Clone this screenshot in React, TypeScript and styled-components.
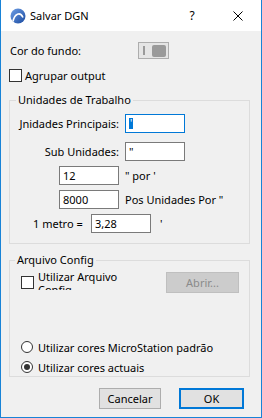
import React from "react";
import styled, { createGlobalStyle } from "styled-components";

const GlobalStyle = createGlobalStyle`
  html, body { margin: 0; padding: 0; background: #f0f0f0; }
  body { font-family: "Noto Sans", "Segoe UI", sans-serif; font-size: 11px; color: #000; }
  * { box-sizing: border-box; }
`;

const Window = styled.div`
  width: 262px;
  height: 418px;
  border: 1px solid #1883d7;
  border-top: none;
  background: #f0f0f0;
  display: flex;
  flex-direction: column;
  overflow: hidden;
`;

const TitleBar = styled.div`
  height: 31px;
  flex: none;
  background: #fff;
  display: flex;
  align-items: center;
  padding-left: 9px;
`;

const TitleText = styled.span`
  margin-left: 4px;
  flex: 1;
  font-size: 11px;
`;

const TitleButton = styled.div`
  width: 46px;
  height: 31px;
  display: flex;
  align-items: center;
  justify-content: center;
  font-size: 12px;
`;

const Body = styled.div`
  flex: 1;
  display: flex;
  flex-direction: column;
  padding: 0 11px 0 8px;
`;

const TopRow = styled.div`
  margin-top: 11px;
  height: 17px;
  display: flex;
  align-items: center;
`;

const TopLabel = styled.span`
  width: 129px;
  padding-left: 1px;
`;

const ToggleBox = styled.div`
  width: 31px;
  height: 17px;
  border: 1px solid #adadad;
  background: #e5e5e5;
  display: flex;
  align-items: center;
  padding-left: 4px;
`;

const ToggleBar = styled.div`
  width: 2px;
  height: 9px;
  background: #9a9a9a;
`;

const ToggleKnob = styled.div`
  width: 14px;
  height: 12px;
  border-radius: 2px;
  background: #9a9a9a;
  margin-left: 7px;
`;

const CheckRow = styled.label<{ $mt: number }>`
  margin-top: ${(p) => p.$mt}px;
  height: 13px;
  display: flex;
  align-items: center;
  gap: 3px;
`;

const CheckBox = styled.span<{ $mt?: number }>`
  width: 13px;
  height: 13px;
  flex: none;
  border: 1px solid #333;
  background: #fff;
  margin-top: ${(p) => p.$mt ?? 0}px;
`;

const Group = styled.fieldset<{ $mt: number; $pb: number }>`
  margin: ${(p) => p.$mt}px 0 0;
  padding: 0 0 ${(p) => p.$pb}px;
  border: 1px solid #dcdcdc;
  min-width: 0;
`;

const Legend = styled.legend<{ $offset: number }>`
  margin-left: ${(p) => p.$offset}px;
  padding: 0 2px;
  line-height: 14px;
  font-size: 11px;
`;

const FieldRow = styled.div<{ $mt: number; $pl?: number }>`
  display: flex;
  align-items: center;
  height: 19px;
  margin-top: ${(p) => p.$mt}px;
  padding-left: ${(p) => p.$pl ?? 0}px;
`;

const RightLabel = styled.span<{ $w: number }>`
  width: ${(p) => p.$w}px;
  text-align: right;
  margin-right: 6px;
  white-space: nowrap;
`;

const LeftLabel = styled.span<{ $w: number }>`
  width: ${(p) => p.$w}px;
  white-space: nowrap;
`;

const TextBox = styled.div<{ $focused?: boolean }>`
  width: 60px;
  height: 19px;
  border: 1px solid ${(p) => (p.$focused ? "#0078d7" : "#7a7a7a")};
  background: #fff;
  padding: 0 3px;
  display: flex;
  align-items: center;
  white-space: nowrap;
`;

const Selected = styled.span`
  background: #0078d7;
  color: #fff;
  height: 11px;
  width: 4px;
  line-height: 11px;
  display: inline-flex;
  justify-content: center;
  font-size: 10px;
`;

const AfterLabel = styled.span<{ $ml: number }>`
  margin-left: ${(p) => p.$ml}px;
  white-space: nowrap;
`;

const ConfigRow = styled.div`
  display: flex;
  align-items: flex-start;
  margin-top: 3px;
  padding: 0 10px 0 11px;
`;

const WrapLabel = styled.span`
  margin-left: 4px;
  width: 90px;
  height: 20px;
  line-height: 13px;
  overflow: hidden;
`;

const Button = styled.div<{ $w: number; $primary?: boolean; $disabled?: boolean }>`
  width: ${(p) => p.$w}px;
  height: 21px;
  display: flex;
  align-items: center;
  justify-content: center;
  background: ${(p) => (p.$disabled ? "#cccccc" : "#e1e1e1")};
  border: ${(p) => (p.$primary ? "2px solid #0078d7" : p.$disabled ? "1px solid #bfbfbf" : "1px solid #adadad")};
  color: ${(p) => (p.$disabled ? "#8a8a8a" : "#000")};
`;

const OpenButton = styled(Button)`
  margin-left: auto;
  margin-top: 2px;
`;

const RadioList = styled.div`
  margin-top: 45px;
  display: flex;
  flex-direction: column;
  gap: 2px;
  padding-left: 11px;
`;

const RadioRow = styled.label`
  height: 18px;
  display: flex;
  align-items: center;
`;

const RadioCircle = styled.span<{ $checked?: boolean }>`
  width: 12px;
  height: 12px;
  border-radius: 50%;
  border: 1px solid #333;
  background: #fff;
  display: flex;
  align-items: center;
  justify-content: center;
  margin-right: 5px;
  &::after {
    content: "";
    width: 6px;
    height: 6px;
    border-radius: 50%;
    background: ${(p) => (p.$checked ? "#333" : "transparent")};
  }
`;

const ButtonRow = styled.div`
  margin-top: 11px;
  display: flex;
  justify-content: flex-end;
  gap: 18px;
  padding-right: 6px;
`;

const AppIcon = () => (
  <svg width="16" height="16" viewBox="0 0 16 16">
    <defs>
      <linearGradient id="ag" x1="0" y1="0" x2="1" y2="1">
        <stop offset="0" stopColor="#6f9fe6" />
        <stop offset="1" stopColor="#1a4aa0" />
      </linearGradient>
    </defs>
    <circle cx="8" cy="8" r="7.5" fill="url(#ag)" />
    <path d="M3 13.5 C 4.5 6, 10 3, 13 9.5" stroke="#fff" strokeWidth="1.6" fill="none" />
  </svg>
);

const CloseIcon = () => (
  <svg width="10" height="10" viewBox="0 0 10 10">
    <path d="M0.5 0.5 L9.5 9.5 M9.5 0.5 L0.5 9.5" stroke="#000" strokeWidth="1" />
  </svg>
);

export default function App() {
  return (
    <>
      <GlobalStyle />
      <Window>
        <TitleBar>
          <AppIcon />
          <TitleText>Salvar DGN</TitleText>
          <TitleButton>?</TitleButton>
          <TitleButton>
            <CloseIcon />
          </TitleButton>
        </TitleBar>
        <Body>
          <TopRow>
            <TopLabel>Cor do fundo:</TopLabel>
            <ToggleBox>
              <ToggleBar />
              <ToggleKnob />
            </ToggleBox>
          </TopRow>
          <CheckRow $mt={10}>
            <CheckBox />
            <span>Agrupar output</span>
          </CheckRow>

          <Group $mt={11} $pb={10}>
            <Legend $offset={6}>Unidades de Trabalho</Legend>
            <FieldRow $mt={7}>
              <RightLabel $w={109}>Jnidades Principais:</RightLabel>
              <TextBox $focused>
                <Selected>'</Selected>
              </TextBox>
            </FieldRow>
            <FieldRow $mt={9}>
              <RightLabel $w={109}>Sub Unidades:</RightLabel>
              <TextBox>"</TextBox>
            </FieldRow>
            <FieldRow $mt={5} $pl={49}>
              <TextBox>12</TextBox>
              <AfterLabel $ml={6}>" por '</AfterLabel>
            </FieldRow>
            <FieldRow $mt={5} $pl={49}>
              <TextBox>8000</TextBox>
              <AfterLabel $ml={6}>Pos Unidades Por "</AfterLabel>
            </FieldRow>
            <FieldRow $mt={5} $pl={23}>
              <LeftLabel $w={58}>1 metro =</LeftLabel>
              <TextBox>3,28</TextBox>
              <AfterLabel $ml={9}>'</AfterLabel>
            </FieldRow>
          </Group>

          <Group $mt={9} $pb={0}>
            <Legend $offset={5}>Arquivo Config</Legend>
            <ConfigRow>
              <CheckBox $mt={6} />
              <WrapLabel>Utilizar Arquivo Config</WrapLabel>
              <OpenButton $w={73} $disabled>
                Abrir...
              </OpenButton>
            </ConfigRow>
            <RadioList>
              <RadioRow>
                <RadioCircle />
                <span>Utilizar cores MicroStation padrão</span>
              </RadioRow>
              <RadioRow>
                <RadioCircle $checked />
                <span>Utilizar cores actuais</span>
              </RadioRow>
            </RadioList>
          </Group>

          <ButtonRow>
            <Button $w={62}>Cancelar</Button>
            <Button $w={65} $primary>
              OK
            </Button>
          </ButtonRow>
        </Body>
      </Window>
    </>
  );
}
